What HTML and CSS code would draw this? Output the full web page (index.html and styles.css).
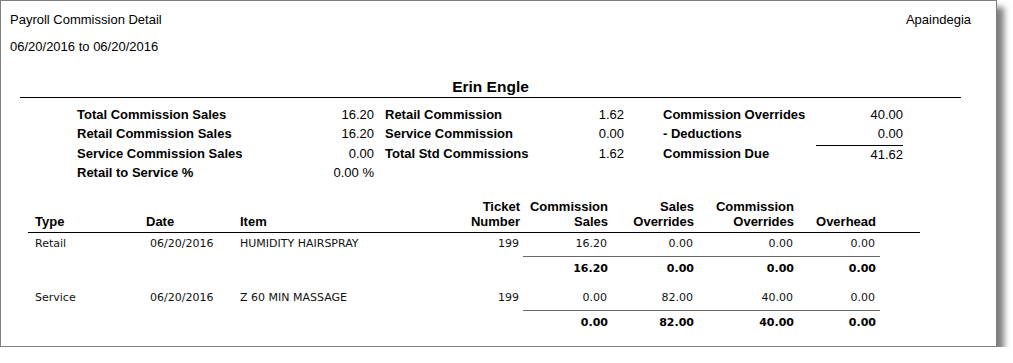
FILE: index.html
```html
<!DOCTYPE html>
<html>
<head>
<meta charset="utf-8">
<link rel="stylesheet" href="styles.css">
</head>
<body>
<div class="page">
  <header class="top">
    <div class="top-row">
      <span>Payroll Commission Detail</span>
      <span>Apaindegia</span>
    </div>
    <div class="range">06/20/2016 to 06/20/2016</div>
  </header>

  <h1 class="name">Erin Engle</h1>

  <section class="summary">
    <div class="col c1">
      <div class="srow"><span class="lbl">Total Commission Sales</span><span class="val">16.20</span></div>
      <div class="srow"><span class="lbl">Retail Commission Sales</span><span class="val">16.20</span></div>
      <div class="srow"><span class="lbl">Service Commission Sales</span><span class="val">0.00</span></div>
      <div class="srow"><span class="lbl">Retail to Service %</span><span class="val">0.00 %</span></div>
    </div>
    <div class="col c2">
      <div class="srow"><span class="lbl">Retail Commission</span><span class="val">1.62</span></div>
      <div class="srow"><span class="lbl">Service Commission</span><span class="val">0.00</span></div>
      <div class="srow"><span class="lbl">Total Std Commissions</span><span class="val">1.62</span></div>
    </div>
    <div class="col c3">
      <div class="srow"><span class="lbl">Commission Overrides</span><span class="val">40.00</span></div>
      <div class="srow"><span class="lbl">- Deductions</span><span class="val">0.00</span></div>
      <div class="srow"><span class="lbl">Commission Due</span><span class="val due">41.62</span></div>
    </div>
  </section>

  <section class="detail">
    <div class="grid thead">
      <div class="h type">Type</div>
      <div class="h">Date</div>
      <div class="h">Item</div>
      <div class="h r">Ticket<br>Number</div>
      <div class="h r">Commission<br>Sales</div>
      <div class="h r">Sales<br>Overrides</div>
      <div class="h r">Commission<br>Overrides</div>
      <div class="h r">Overhead</div>
      <div></div>
    </div>

    <div class="group">
      <div class="grid drow">
        <div class="type">Retail</div>
        <div class="date">06/20/2016</div>
        <div>HUMIDITY HAIRSPRAY</div>
        <div class="r">199</div>
        <div class="r">16.20</div>
        <div class="r">0.00</div>
        <div class="r">0.00</div>
        <div class="r">0.00</div>
        <div></div>
      </div>
      <div class="rule"></div>
      <div class="grid trow">
        <div></div><div></div><div></div><div></div>
        <div class="r">16.20</div>
        <div class="r">0.00</div>
        <div class="r">0.00</div>
        <div class="r">0.00</div>
        <div></div>
      </div>
    </div>

    <div class="group">
      <div class="grid drow">
        <div class="type">Service</div>
        <div class="date">06/20/2016</div>
        <div>Z 60 MIN MASSAGE</div>
        <div class="r">199</div>
        <div class="r">0.00</div>
        <div class="r">82.00</div>
        <div class="r">40.00</div>
        <div class="r">0.00</div>
        <div></div>
      </div>
      <div class="rule"></div>
      <div class="grid trow">
        <div></div><div></div><div></div><div></div>
        <div class="r">0.00</div>
        <div class="r">82.00</div>
        <div class="r">40.00</div>
        <div class="r">0.00</div>
        <div></div>
      </div>
    </div>
  </section>
</div>
</body>
</html>
```

FILE: styles.css
```css
html, body {
  margin: 0;
  padding: 0;
  background: #fff;
}

body {
  font-family: "Liberation Sans", Arial, sans-serif;
  color: #000;
}

.page {
  box-sizing: border-box;
  width: 997px;
  height: 347px;
  border: 1px solid #7f7f7f;
  background: #fff;
  box-shadow: 7px 7px 6px rgba(0, 0, 0, 0.5);
  overflow: hidden;
}

/* header */
.top {
  padding: 11px 25px 0 9px;
  font-size: 13px;
  line-height: 16px;
}

.top-row {
  display: flex;
  justify-content: space-between;
}

.range {
  margin-top: 11px;
}

/* employee name */
.name {
  margin: 23px 35px 0 19px;
  padding-bottom: 1px;
  border-bottom: 1px solid #000;
  text-align: center;
  font-size: 15.5px;
  line-height: 18px;
  font-weight: bold;
}

/* summary block */
.summary {
  display: flex;
  margin-top: 7px;
  padding-left: 76px;
  font-size: 13px;
  line-height: 19.33px;
}

.col {
  display: flex;
  flex-direction: column;
}

.c1 { width: 297px; }
.c2 { width: 239px; margin-left: 11px; }
.c3 { width: 240px; margin-left: 39px; }

.srow {
  display: flex;
  justify-content: space-between;
  align-items: flex-start;
}

.lbl {
  font-weight: bold;
}

.val {
  text-align: right;
}

.due {
  box-sizing: border-box;
  width: 87px;
  margin-top: 1px;
  line-height: 18.33px;
  border-top: 1px solid #000;
}

/* detail table */
.detail {
  margin: 17px 0 0 27px;
  width: 892px;
}

.grid {
  display: grid;
  grid-template-columns: 118px 94px 200px 80px 88px 86px 100px 82px 44px;
}

.thead {
  align-items: end;
  padding-bottom: 3px;
  border-bottom: 1px solid #000;
  font-size: 13px;
  line-height: 15px;
  font-weight: bold;
}

.r {
  text-align: right;
}

.type {
  padding-left: 7px;
}

.drow {
  font-family: "DejaVu Sans", Verdana, sans-serif;
  font-size: 11px;
  line-height: 22px;
  color: #111;
}

.drow .r {
  padding-right: 1px;
}

.date {
  padding-left: 4px;
}

.rule {
  margin: 1px 0 0 495px;
  width: 357px;
  border-top: 1px solid #6a6a6a;
}

.trow {
  font-family: "DejaVu Sans", Verdana, sans-serif;
  font-size: 11px;
  line-height: 23px;
  font-weight: bold;
}

.group + .group {
  margin-top: 7px;
}
```
